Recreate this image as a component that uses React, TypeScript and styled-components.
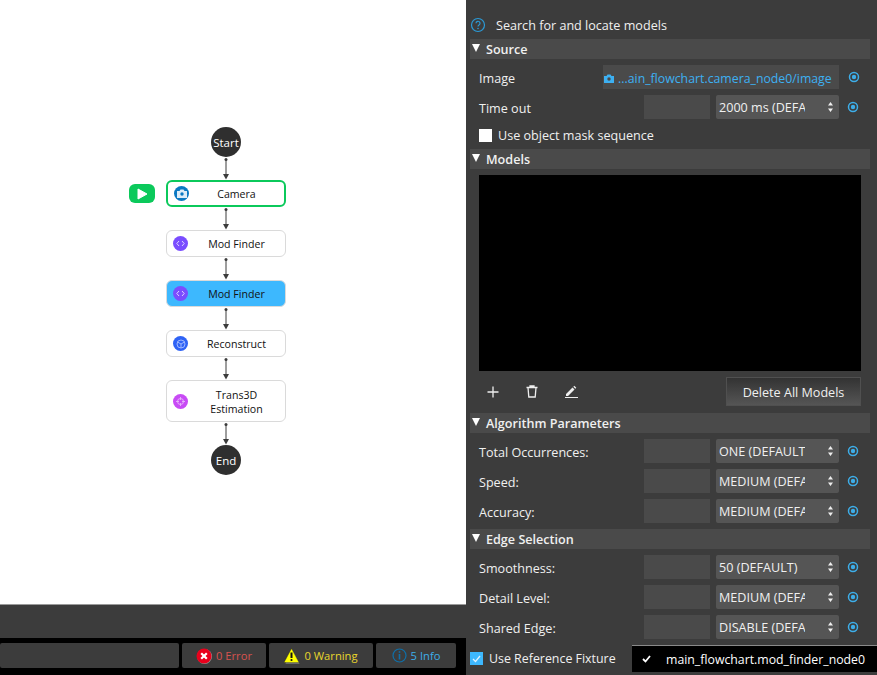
import styled, { createGlobalStyle } from 'styled-components'

const GlobalStyle = createGlobalStyle`
  html, body {
    margin: 0;
    padding: 0;
    width: 877px;
    height: 675px;
    overflow: hidden;
    background: #3c3c3c;
    font-family: "Open Sans", "Noto Sans", sans-serif;
  }
`

const Page = styled.div`
  display: grid;
  grid-template-columns: 466px 411px;
  width: 877px;
  height: 675px;
  overflow: hidden;
`

const LeftPane = styled.div`
  display: flex;
  flex-direction: column;
  height: 675px;
`

const Canvas = styled.div`
  height: 605px;
  box-sizing: border-box;
  background: #fff;
  border-bottom: 1px solid #9a9a9a;
  padding: 127px 0 0 166px;
`

const Flow = styled.div`
  position: relative;
  display: flex;
  flex-direction: column;
  align-items: center;
  width: 120px;
`

const Terminal = styled.div`
  width: 30px;
  height: 30px;
  border-radius: 50%;
  background: #2f2f2f;
  color: #fff;
  font-size: 11.5px;
  line-height: 31px;
  text-align: center;
`

const Node = styled.div<{ $tone?: 'running' | 'selected'; $tall?: boolean }>`
  box-sizing: border-box;
  display: flex;
  align-items: center;
  width: 120px;
  height: ${({ $tall }) => ($tall ? 42 : 27)}px;
  padding-left: 6px;
  border-radius: 6px;
  border: ${({ $tone }) => ($tone === 'running' ? '2px solid #0bc95b' : '1.5px solid #dadada')};
  background: ${({ $tone }) => ($tone === 'selected' ? '#3db8fe' : '#fff')};
  color: #111;
  font-size: 10.6px;
  line-height: 14px;
`

const NodeBadge = styled.span<{ $color: string }>`
  flex: none;
  display: flex;
  align-items: center;
  justify-content: center;
  width: 15px;
  height: 15px;
  border-radius: 50%;
  background: ${({ $color }) => $color};
`

const NodeLabel = styled.span`
  flex: 1;
  padding-top: 1px;
  text-align: center;
  white-space: pre-line;
`

const PlayBadge = styled.div`
  position: absolute;
  left: -37px;
  top: 57px;
  display: flex;
  align-items: center;
  justify-content: center;
  width: 26px;
  height: 19px;
  border-radius: 6px;
  background: #0bc95b;
`

const StatusGap = styled.div`
  height: 33px;
  background: #3c3c3c;
`

const LogBar = styled.div`
  display: flex;
  gap: 3px;
  height: 37px;
  box-sizing: border-box;
  padding: 5px 0 0;
  background: #000;
`

const LogButton = styled.div<{ $width: number; $color: string }>`
  display: flex;
  align-items: center;
  justify-content: center;
  gap: 4px;
  width: ${({ $width }) => $width}px;
  height: 25px;
  border-radius: 2px;
  background: #3c3c3c;
  color: ${({ $color }) => $color};
  font-size: 11.2px;
`

const RightPane = styled.div`
  position: relative;
  display: flex;
  flex-direction: column;
  height: 675px;
  box-sizing: border-box;
  padding: 15px 7px 0 4px;
  background: #3c3c3c;
  color: #f0f0f0;
  font-size: 12.6px;
`

const Description = styled.div`
  display: flex;
  align-items: center;
  gap: 10px;
  height: 20px;
  margin-bottom: 4px;
`

const SectionHeader = styled.div`
  display: flex;
  align-items: center;
  gap: 6px;
  height: 20px;
  box-sizing: border-box;
  padding: 1px 0 0 2px;
  background: #4a4a4a;
  font-weight: 600;
`

const Caret = styled.span`
  width: 0;
  height: 0;
  margin-bottom: 3px;
  border-left: 4.5px solid transparent;
  border-right: 4.5px solid transparent;
  border-top: 8px solid #fff;
`

const ParamList = styled.div`
  display: flex;
  flex-direction: column;
  gap: 6px;
  padding: 6px 0;
`

const ParamRow = styled.div`
  display: flex;
  align-items: center;
  height: 24px;
  padding-left: 9px;
`

const ParamLabel = styled.span`
  flex: none;
  width: 165px;
  padding-top: 2px;
`

const ParamInput = styled.div`
  flex: none;
  width: 66px;
  height: 24px;
  margin-right: 6px;
  background: #4a4a4a;
`

const Select = styled.div`
  position: relative;
  flex: none;
  box-sizing: border-box;
  width: 123px;
  height: 24px;
  padding-left: 3px;
  border-radius: 2px;
  background: #555;
  line-height: 26px;
`

const SelectText = styled.div`
  width: 86px;
  height: 24px;
  overflow: hidden;
  white-space: nowrap;
`

const Spinner = styled.svg`
  position: absolute;
  right: 6px;
  top: 7px;
`

const SourceField = styled.div`
  flex: none;
  display: flex;
  align-items: center;
  gap: 4px;
  box-sizing: border-box;
  width: 236px;
  height: 24px;
  margin: 0 0 0 -41px;
  padding: 2px 0 0 1px;
  background: #4a4a4a;
  color: #3db0f2;
  font-size: 12.3px;
  white-space: nowrap;
  overflow: hidden;
`

const Target = styled.svg<{ $gap: number }>`
  flex: none;
  margin-left: ${({ $gap }) => $gap}px;
`

const CheckRow = styled.label`
  display: flex;
  align-items: center;
  gap: 6px;
  height: 14px;
  padding-left: 9px;
  margin: 3px 0 7px;
`

const Checkbox = styled.span`
  width: 13px;
  height: 13px;
  background: #fff;
`

const ModelsBox = styled.div`
  width: 382px;
  height: 196px;
  margin: 6px 0 6px 9px;
  background: #000;
`

const ModelTools = styled.div`
  display: flex;
  align-items: center;
  height: 29px;
  margin: 0 9px 7px 9px;
`

const ToolIcon = styled.svg`
  margin-left: 8px;
  margin-right: 19px;
`

const DeleteButton = styled.div`
  margin-left: auto;
  width: 135px;
  height: 29px;
  box-sizing: border-box;
  border: 1px solid #505050;
  background: linear-gradient(#333, #555);
  text-align: center;
  line-height: 29px;
`

const FixtureRow = styled.div`
  display: flex;
  align-items: center;
  gap: 6px;
  margin-top: 7px;
  height: 13px;
  font-size: 12.4px;
`

const FixtureCheck = styled.span`
  display: flex;
  align-items: center;
  justify-content: center;
  width: 13px;
  height: 13px;
  background: #3db8fe;
`

const FixtureMenu = styled.div`
  position: absolute;
  left: 166px;
  top: 645px;
  display: flex;
  align-items: center;
  gap: 15px;
  width: 245px;
  height: 27px;
  box-sizing: border-box;
  padding-left: 10px;
  border-top: 1px solid #8a8a8a;
  background: #000;
  color: #fff;
  font-size: 12.3px;
`

const Connector = () => (
  <svg width="10" height="23" viewBox="0 0 10 23">
    <circle cx="5" cy="2.500" r="1.500" fill="#3c3c3c" />
    <path d="M5 3v15" stroke="#3c3c3c" strokeWidth="1" />
    <path d="M2 17h6l-3 5.500z" fill="#3c3c3c" />
  </svg>
)

const Code = () => (
  <svg width="9" height="7" viewBox="0 0 9 7" fill="none" stroke="#dcd2ff" strokeWidth="1">
    <path d="M3 1L.8 3.500 3 6M6 1l2.200 2.500L6 6" />
  </svg>
)

const CameraGlyph = ({ color, hole }: { color: string; hole: string }) => (
  <svg width="10" height="9" viewBox="0 0 10 9">
    <path d="M0 2h2.500l1-1.600h3L7.500 2H10v7H0z" fill={color} />
    <circle cx="5" cy="5" r="1.700" fill={hole} />
  </svg>
)

const RadioTarget = ({ gap = 8 }: { gap?: number }) => (
  <Target $gap={gap} width="12" height="12" viewBox="0 0 12 12">
    <circle cx="6" cy="6" r="4.500" fill="none" stroke="#3daee9" strokeWidth="1.500" />
    <circle cx="6" cy="6" r="2.200" fill="#3daee9" />
  </Target>
)

const Param = ({ label, value }: { label: string; value: string }) => (
  <ParamRow>
    <ParamLabel>{label}</ParamLabel>
    <ParamInput />
    <Select>
      <SelectText>{value}</SelectText>
      <Spinner width="5" height="10" viewBox="0 0 5 10" fill="#eee">
        <path d="M2.500 0L5 3.500H0zM2.500 10L0 6.500h5z" />
      </Spinner>
    </Select>
    <RadioTarget />
  </ParamRow>
)

export default function App() {
  return (
    <Page>
      <GlobalStyle />
      <LeftPane>
        <Canvas>
          <Flow>
            <PlayBadge>
              <svg width="11" height="12" viewBox="0 0 11 12">
                <path d="M1 1l9 5-9 5z" fill="#fff" stroke="#fff" strokeLinejoin="round" />
              </svg>
            </PlayBadge>
            <Terminal>Start</Terminal>
            <Connector />
            <Node $tone="running">
              <NodeBadge $color="#0a78c2">
                <CameraGlyph color="#dcecf8" hole="#0a78c2" />
              </NodeBadge>
              <NodeLabel>Camera</NodeLabel>
            </Node>
            <Connector />
            <Node>
              <NodeBadge $color="#7a4dff"><Code /></NodeBadge>
              <NodeLabel>Mod Finder</NodeLabel>
            </Node>
            <Connector />
            <Node $tone="selected">
              <NodeBadge $color="#7a4dff"><Code /></NodeBadge>
              <NodeLabel>Mod Finder</NodeLabel>
            </Node>
            <Connector />
            <Node>
              <NodeBadge $color="#2f63f5">
                <svg width="10" height="10" viewBox="0 0 10 10" fill="none" stroke="#a9c0ff" strokeWidth=".9">
                  <circle cx="5" cy="5" r="4" />
                  <path d="M5 5v4M5 5L1.500 3M5 5l3.500-2" />
                </svg>
              </NodeBadge>
              <NodeLabel>Reconstruct</NodeLabel>
            </Node>
            <Connector />
            <Node $tall>
              <NodeBadge $color="#c84bf5">
                <svg width="11" height="11" viewBox="0 0 11 11" fill="none" stroke="#e6b5fb" strokeWidth=".9">
                  <circle cx="5.500" cy="5.500" r="3" />
                  <path d="M5.500 1v3M5.500 7v3M1 5.500h3M7 5.500h3" />
                </svg>
              </NodeBadge>
              <NodeLabel>{'Trans3D\nEstimation'}</NodeLabel>
            </Node>
            <Connector />
            <Terminal>End</Terminal>
          </Flow>
        </Canvas>
        <StatusGap />
        <LogBar>
          <LogButton $width={179} $color="#fff" />
          <LogButton $width={84} $color="#d9534f">
            <svg width="16" height="16" viewBox="0 0 16 16">
              <circle cx="8.500" cy="8.500" r="7.500" fill="#999" />
              <circle cx="8" cy="8" r="7.500" fill="#e8001c" />
              <path d="M5.200 5.200l5.600 5.600M10.800 5.200l-5.600 5.600" stroke="#fff" strokeWidth="2.200" />
            </svg>
            0 Error
          </LogButton>
          <LogButton $width={104} $color="#e8d62c">
            <svg width="16" height="16" viewBox="0 0 16 16">
              <path d="M8 1.500l7.500 14H1.500z" fill="#999" />
              <path d="M7.500 0.500l7.500 14H0z" fill="#ffff00" stroke="#222" strokeWidth=".4" />
              <path d="M7.500 4.500v5.500" stroke="#111" strokeWidth="2" />
              <circle cx="7.500" cy="12" r="1.100" fill="#111" />
            </svg>
            0 Warning
          </LogButton>
          <LogButton $width={80} $color="#3daee9">
            <svg width="15" height="15" viewBox="0 0 15 15" fill="none" stroke="#0f6fa8" strokeWidth="1.200">
              <circle cx="7.500" cy="7.500" r="6.500" />
              <path d="M7.500 6v5.500" strokeWidth="1.600" />
              <path d="M7.500 3.200v1.600" strokeWidth="1.600" />
            </svg>
            5 Info
          </LogButton>
        </LogBar>
      </LeftPane>
      <RightPane>
        <Description>
          <svg width="16" height="16" viewBox="0 0 16 16" fill="none">
            <circle cx="8" cy="8" r="6.500" stroke="#2b9ad6" strokeWidth="1.200" />
            <path d="M6 6.300a2 2 0 1 1 3 1.700c-.7.400-1 .8-1 1.500" stroke="#2b9ad6" strokeWidth="1.200" />
            <circle cx="8" cy="11.500" r=".8" fill="#2b9ad6" />
          </svg>
          Search for and locate models
        </Description>
        <SectionHeader><Caret />Source</SectionHeader>
        <ParamList>
          <ParamRow>
            <ParamLabel>Image</ParamLabel>
            <SourceField>
              <CameraGlyph color="#3db0f2" hole="#4a4a4a" />
              ...ain_flowchart.camera_node0/image
            </SourceField>
            <RadioTarget gap={9} />
          </ParamRow>
          <Param label="Time out" value="2000 ms (DEFAULT)" />
        </ParamList>
        <CheckRow><Checkbox />Use object mask sequence</CheckRow>
        <SectionHeader><Caret />Models</SectionHeader>
        <ModelsBox />
        <ModelTools>
          <ToolIcon width="12" height="12" viewBox="0 0 12 12" stroke="#eee" strokeWidth="1.300">
            <path d="M6 .5v11M.5 6h11" />
          </ToolIcon>
          <ToolIcon width="12" height="13" viewBox="0 0 12 13" fill="none" stroke="#eee" strokeWidth="1.300">
            <path d="M.5 2.500h11M4 2.500V1h4v1.500M2 2.500l.8 9.500h6.400l.8-9.500" />
          </ToolIcon>
          <ToolIcon width="13" height="13" viewBox="0 0 13 13" fill="#eee">
            <path d="M1 9l6.500-6.500 2 2L3 11H1zM8.300 1.700l1-1 2 2-1 1z" />
            <path d="M0 12h13v1H0z" />
          </ToolIcon>
          <DeleteButton>Delete All Models</DeleteButton>
        </ModelTools>
        <SectionHeader><Caret />Algorithm Parameters</SectionHeader>
        <ParamList>
          <Param label="Total Occurrences:" value="ONE (DEFAULT)" />
          <Param label="Speed:" value="MEDIUM (DEFAULT)" />
          <Param label="Accuracy:" value="MEDIUM (DEFAULT)" />
        </ParamList>
        <SectionHeader><Caret />Edge Selection</SectionHeader>
        <ParamList>
          <Param label="Smoothness:" value="50 (DEFAULT)" />
          <Param label="Detail Level:" value="MEDIUM (DEFAULT)" />
          <Param label="Shared Edge:" value="DISABLE (DEFAULT)" />
        </ParamList>
        <FixtureRow>
          <FixtureCheck>
            <svg width="9" height="8" viewBox="0 0 9 8" fill="none" stroke="#dff3ff" strokeWidth="1.300">
              <path d="M1 4l2.500 2.500L8 1" />
            </svg>
          </FixtureCheck>
          Use Reference Fixture
        </FixtureRow>
        <FixtureMenu>
          <svg width="9" height="8" viewBox="0 0 9 8" fill="none" stroke="#fff" strokeWidth="1.800">
            <path d="M1 4l2.500 2.500L8 1" />
          </svg>
          main_flowchart.mod_finder_node0
        </FixtureMenu>
      </RightPane>
    </Page>
  )
}
